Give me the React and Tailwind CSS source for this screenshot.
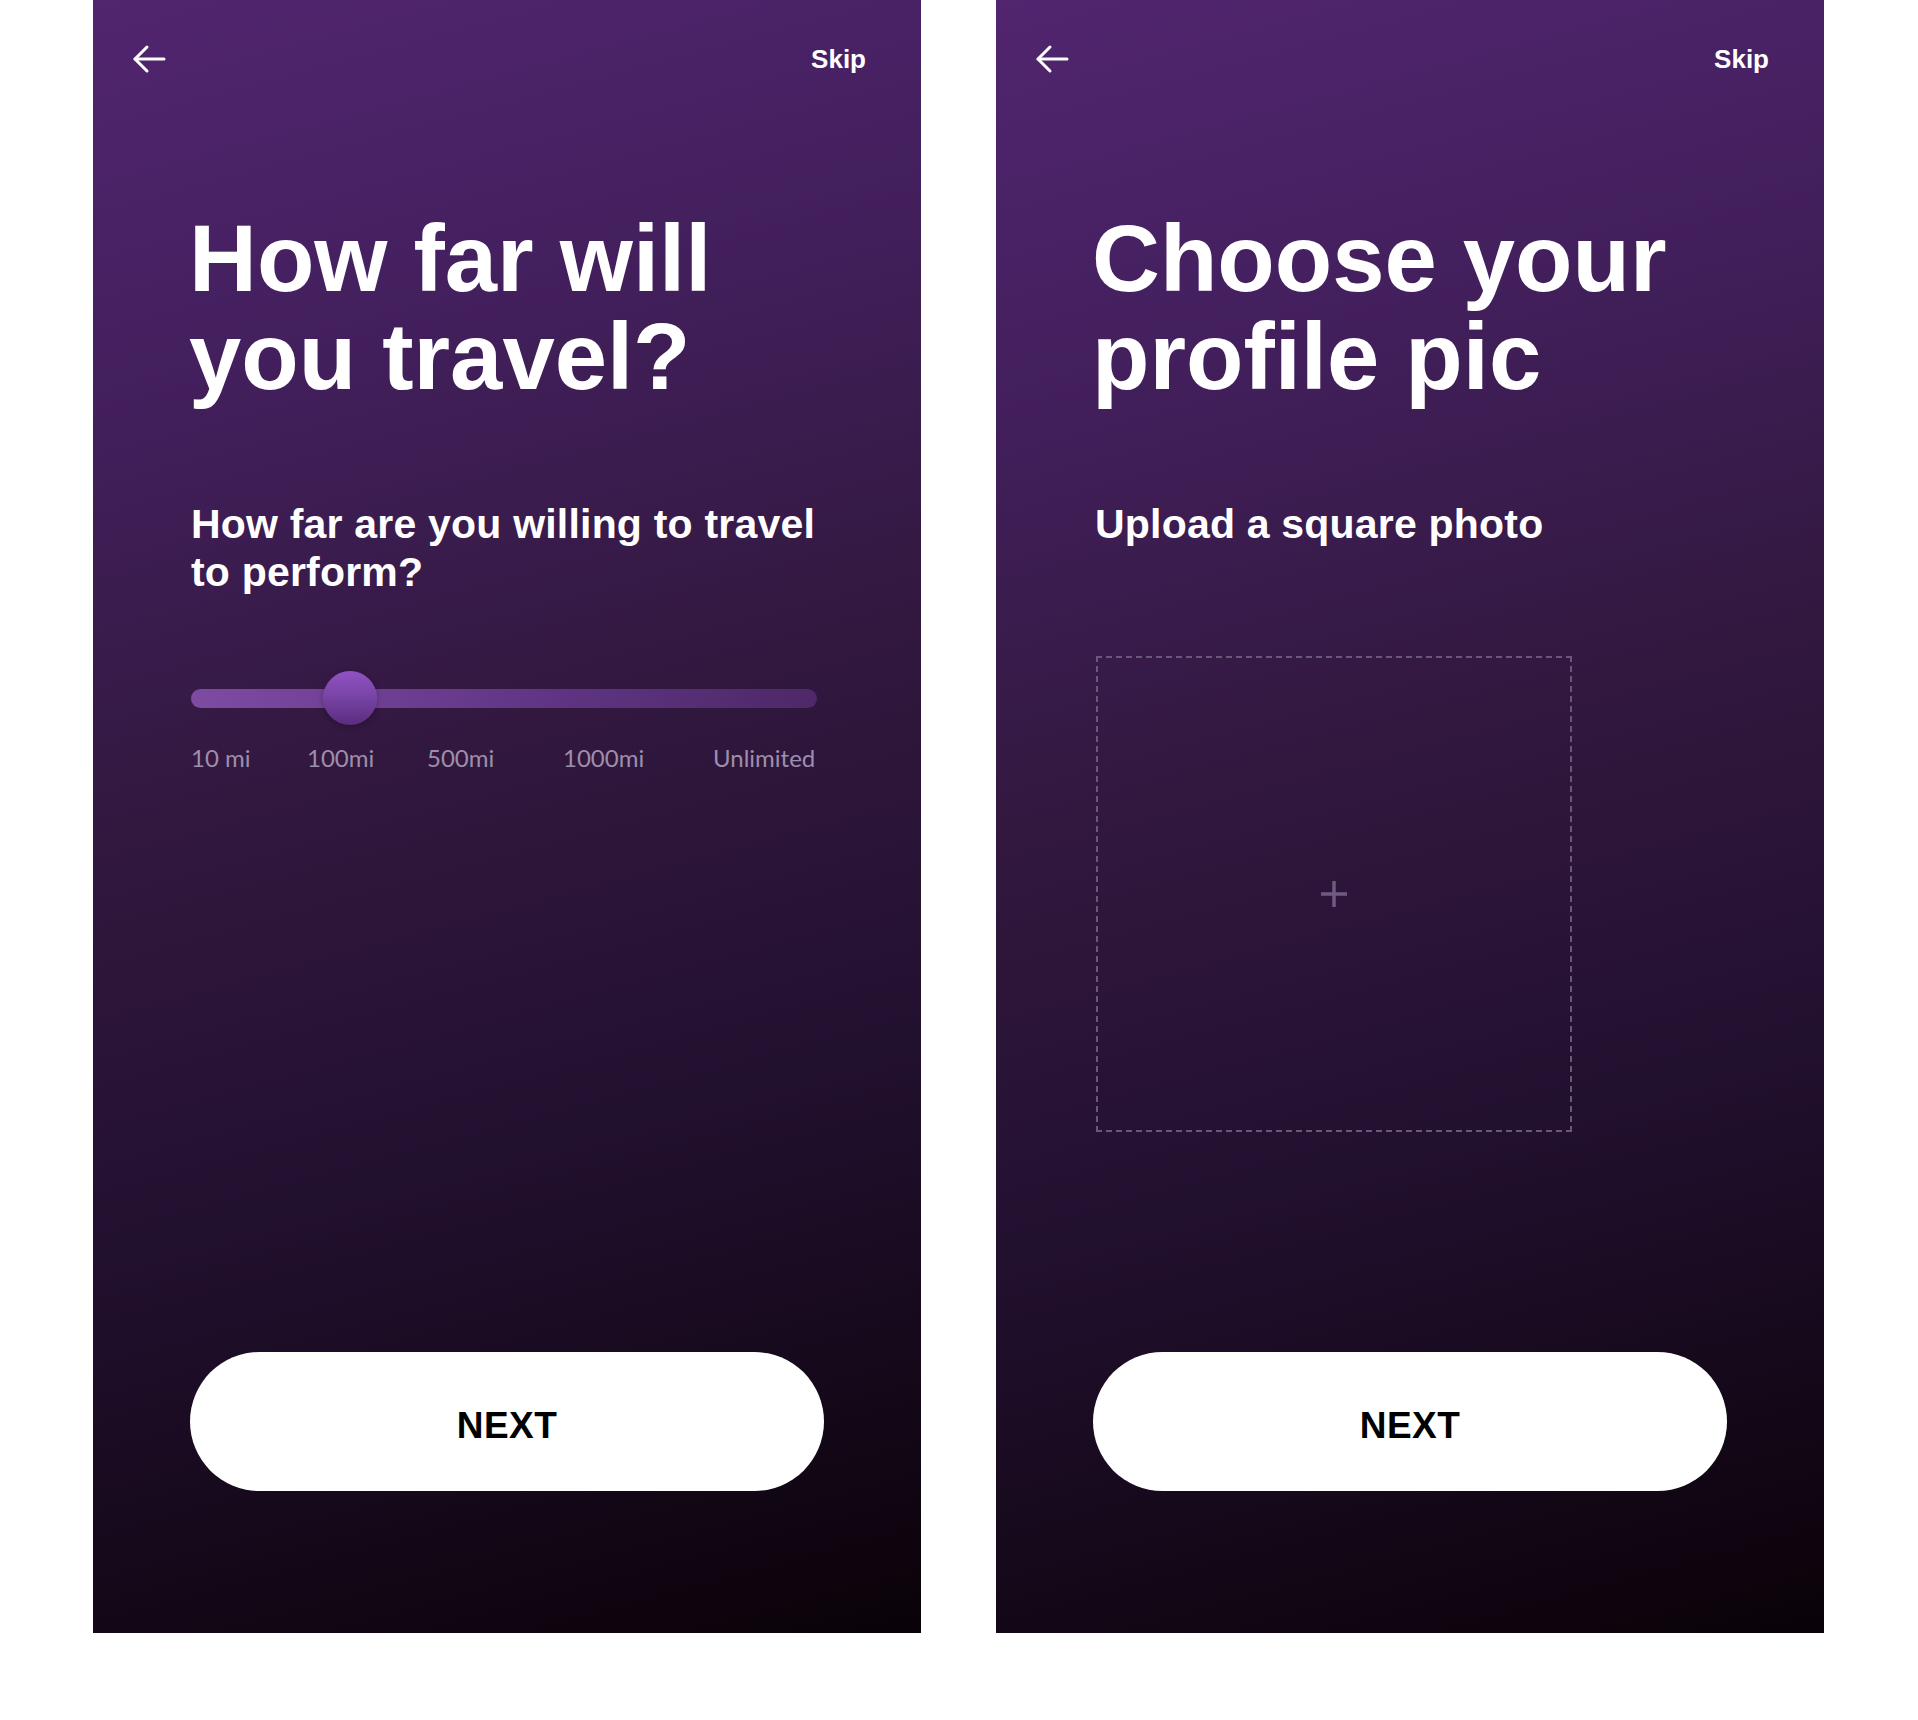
import React from 'react';

const panelBg =
    'bg-[linear-gradient(165deg,#51256f_0%,#44205f_20%,#32183f_45%,#22102f_68%,#0a0208_100%)]';

function BackArrow() {
    return (
        <svg width="34" height="30" viewBox="0 0 34 30" fill="none" stroke="white" strokeWidth="3" strokeLinecap="round" strokeLinejoin="round">
            <path d="M3 15 H32" />
            <path d="M15 3 L3 15 L15 27" />
        </svg>
    );
}

function Header() {
    return (
        <div className="flex items-center justify-between pl-[39px] pr-[55px] pt-[44px] h-[74px]">
            <BackArrow />
            <span className="text-white text-[26px] font-bold leading-[30px] font-['Liberation_Sans',sans-serif]">Skip</span>
        </div>
    );
}

function NextButton() {
    return (
        <div className="mt-auto mb-[142px] px-[97px]">
            <button className="w-full h-[139px] pt-[8px] rounded-full bg-white text-black text-[37px] font-bold tracking-[0.5px] font-['Liberation_Sans',sans-serif]">
                NEXT
            </button>
        </div>
    );
}

function Title({ lines }) {
    return (
        <h1 className="mt-[136px] pl-[96px] text-white text-[94px] leading-[98px] font-bold font-['Liberation_Sans',sans-serif]">
            {lines[0]}
            <br />
            {lines[1]}
        </h1>
    );
}

function TravelPanel() {
    return (
        <div className={`w-[828px] h-[1633px] flex flex-col ${panelBg}`}>
            <Header />
            <Title lines={['How far will', 'you travel?']} />
            <p className="mt-[94px] pl-[98px] pr-[97px] text-white text-[41px] leading-[48px] font-bold tracking-[0.2px] font-['Liberation_Sans',sans-serif]">
                How far are you willing to travel to perform?
            </p>

            {/* distance slider */}
            <div className="mt-[75px] ml-[98px] mr-[104px]">
                <div className="relative h-[54px] flex items-center">
                    <div className="w-full h-[19px] rounded-full bg-[linear-gradient(90deg,#7e4ba3_0%,#6e3f93_30%,#5e3482_60%,#4e2868_100%)]" />
                    <div className="absolute left-[132px] top-0 w-[54px] h-[54px] rounded-full bg-[linear-gradient(180deg,#9152c4_0%,#7a45a8_45%,#5a2c7e_100%)] shadow-[0_2px_6px_rgba(0,0,0,0.25)]" />
                </div>
                <div className="mt-[19px] flex text-[24px] leading-[28px] text-[#9d8fab] font-['Lato',sans-serif]">
                    <span className="w-[116px]">10 mi</span>
                    <span className="w-[120px]">100mi</span>
                    <span className="w-[136px]">500mi</span>
                    <span className="w-[150px]">1000mi</span>
                    <span>Unlimited</span>
                </div>
            </div>

            <NextButton />
        </div>
    );
}

function PhotoPanel() {
    return (
        <div className={`w-[828px] h-[1633px] flex flex-col ${panelBg}`}>
            <Header />
            <Title lines={['Choose your', 'profile pic']} />
            <p className="mt-[94px] pl-[99px] text-white text-[41px] leading-[48px] font-bold tracking-[0.2px] font-['Liberation_Sans',sans-serif]">
                Upload a square photo
            </p>

            {/* upload drop zone */}
            <div className="mt-[108px] ml-[100px] w-[476px] h-[476px] border-2 border-dashed border-[#6a5878] flex items-center justify-center">
                <svg width="32" height="32" viewBox="0 0 32 32" stroke="#6f5a82" strokeWidth="3.5">
                    <path d="M16 3 V29" />
                    <path d="M3 16 H29" />
                </svg>
            </div>

            <NextButton />
        </div>
    );
}

export default function App() {
    return (
        <div className="w-[1918px] h-[1720px] bg-white flex gap-[75px] pl-[93px]">
            <TravelPanel />
            <PhotoPanel />
        </div>
    );
}
